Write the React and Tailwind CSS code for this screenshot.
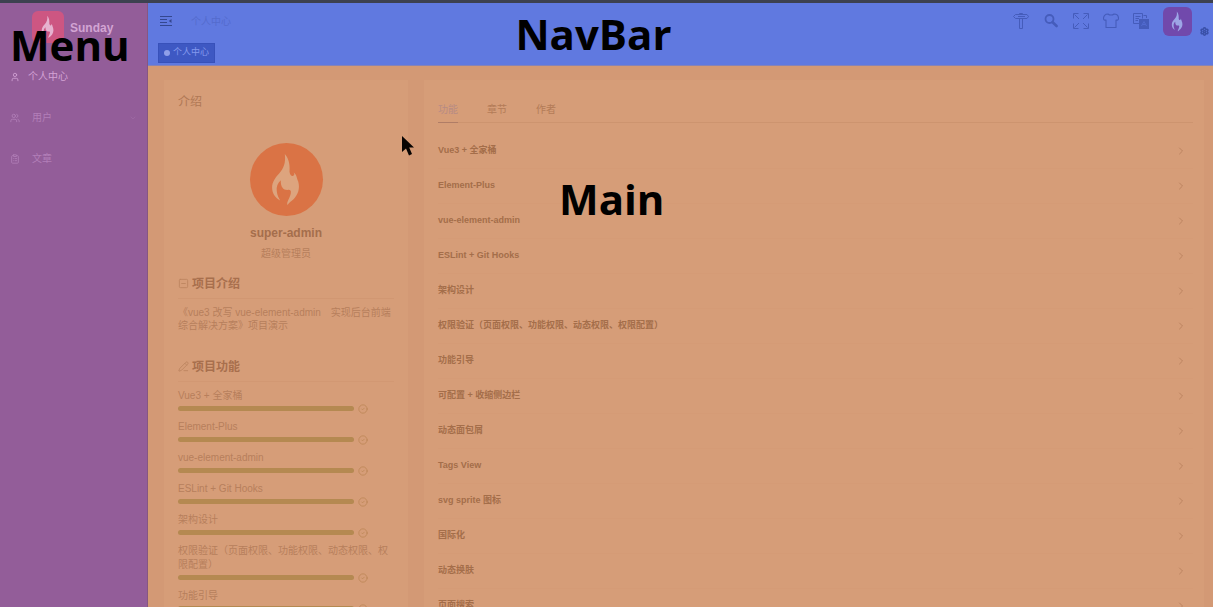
import React from "react";
import { User, Users, ClipboardList, ChevronDown, ChevronRight, Settings, CircleCheck, SquareMinus, PencilLine } from "lucide-react";

const features = [
  "Vue3 + 全家桶",
  "Element-Plus",
  "vue-element-admin",
  "ESLint + Git Hooks",
  "架构设计",
  "权限验证（页面权限、功能权限、动态权限、权限配置）",
  "功能引导",
  "可配置 + 收缩侧边栏",
  "动态面包屑",
  "Tags View",
  "svg sprite 图标",
  "国际化",
  "动态换肤",
  "页面搜索",
];

function Flame({ className }) {
  return (
    <svg viewBox="0 0 218 218" className={className} fill="currentColor" aria-hidden="true">
      <path d="M104 33C119 51 119 71 118 86C119 97 127 101 130 97C134 94 132 90 130 87C140 94 139 104 144 115C150 137 143 154 130 168C123 175 116 178 112 185C108 176 120 164 122 149C123 140 119 139 112 140C99 140 91 131 92 111C83 119 78 130 80 144C81 156 86 164 90 172C74 163 66 149 66 133C66 116 76 103 87 91C101 75 107 60 104 33Z" />
    </svg>
  );
}

function FoldIcon() {
  return (
    <svg viewBox="0 0 12 12" className="size-3" fill="none" stroke="currentColor" aria-hidden="true">
      <path d="M0 1.5H12M0 4.5H7M0 7.5H7M0 10.5H12" />
      <path d="M11.5 4V8L8.8 6Z" fill="currentColor" stroke="none" />
    </svg>
  );
}

function SignpostIcon() {
  return (
    <svg viewBox="0 0 16 16" className="size-4" fill="none" stroke="currentColor" aria-hidden="true">
      <path d="M2.5 1.5H14L15.5 3.5L14 5.5H2.5L.5 3.5ZM6.5 5.5V15.5H9.5V5.5M6.5 1.5V.5H9.5V1.5M5 3.5H12" />
    </svg>
  );
}

function SearchIcon() {
  return (
    <svg viewBox="0 0 16 16" className="size-4" fill="none" stroke="currentColor" aria-hidden="true">
      <circle cx="6.5" cy="6" r="4" strokeWidth="1.8" />
      <path d="M9.6 9.2L13.6 13" strokeWidth="2.6" strokeLinecap="round" />
    </svg>
  );
}

function FullscreenIcon() {
  return (
    <svg viewBox="0 0 16 16" className="size-4" fill="none" stroke="currentColor" aria-hidden="true">
      <path d="M5.5.5H.5V5.5M1.5 1.5L6 6M10.5.5H15.5V5.5M14.5 1.5L10 6M.5 10.5V15.5H5.5M1.5 14.5L6 10M15.5 10.5V15.5H10.5M14.5 14.5L10 10" />
    </svg>
  );
}

function ShirtIcon() {
  return (
    <svg viewBox="0 0 16 16" className="size-4" fill="none" stroke="currentColor" strokeWidth="1.1" strokeLinejoin="round" aria-hidden="true">
      <path d="M5 1C6.5 2.4 9.5 2.4 11 1C14 1 15.5 3 15.5 5.5C15.5 7 14.5 7.3 13 7V14.5H3V7C1.5 7.3.5 7 .5 5.5C.5 3 2 1 5 1Z" />
    </svg>
  );
}

function LanguageIcon() {
  return (
    <svg viewBox="0 0 16 16" className="size-4" fill="none" stroke="currentColor" aria-hidden="true">
      <path d="M6 10.5H.5V.5H9.5V5.5M2.5 3.5H7.5M2.5 5.5H6M2.5 7.5H5M10.5 2.5H13.5V5" />
      <rect x="6" y="6" width="10" height="10" fill="currentColor" stroke="none" />
      <path d="M8.5 13L11 8.5L13.5 13M9.5 11.5H12.5" className="stroke-[#526bd0]" />
    </svg>
  );
}

function RegionLabel({ className, children }) {
  return (
    <strong className={"pointer-events-none absolute font-['Open_Sans','Noto_Sans',sans-serif] text-[42px] leading-12 font-bold text-black " + className}>
      {children}
    </strong>
  );
}

function Sidebar() {
  return (
    <aside className="relative w-37 shrink-0 border-r border-[#865781] bg-[#935d99]">
      <div className="flex h-[53px] items-start gap-[6px] pt-2 pl-8">
        <div className="size-8 rounded-md bg-[#cd5682]">
          <Flame className="size-8 text-[#e6b2cf]" />
        </div>
        <h1 className="pt-[9px] text-[12px] leading-4 font-bold text-[#d2a4d3]">Sunday</h1>
      </div>
      <nav className="text-[10px]">
        <a href="#profile" className="flex h-[41px] items-center gap-2 px-[10px] text-[#d3a2d5]">
          <User className="size-[10px]" />个人中心
        </a>
        <a href="#users" className="flex h-[41px] items-center gap-3 px-[10px] text-[#b27fb8]">
          <Users className="size-[10px]" />用户
          <ChevronDown className="ml-auto size-2 text-[#a26ca8]" />
        </a>
        <a href="#articles" className="flex h-[41px] items-center gap-3 px-[10px] text-[#b27fb8]">
          <ClipboardList className="size-[10px]" />文章
        </a>
      </nav>
      <RegionLabel className="top-[18px] left-[10px]">Menu</RegionLabel>
    </aside>
  );
}

function NavBar() {
  return (
    <header className="relative h-[63px] shrink-0 border-b border-[#8783b5] bg-[#6079e0]">
      <div className="flex h-9 items-center pr-1 pl-3">
        <button type="button" aria-label="折叠菜单" className="text-[#34478f]"><FoldIcon /></button>
        <span className="ml-[19px] text-[10px] text-[#546bcd]">个人中心</span>
        <div className="ml-auto flex items-center gap-[14px] text-[#455cbb]">
          <button type="button" aria-label="引导"><SignpostIcon /></button>
          <button type="button" aria-label="搜索"><SearchIcon /></button>
          <button type="button" aria-label="全屏"><FullscreenIcon /></button>
          <button type="button" aria-label="换肤"><ShirtIcon /></button>
          <button type="button" aria-label="语言"><LanguageIcon /></button>
          <button type="button" aria-label="用户" className="size-[29px] rounded-md bg-[#7149ac]">
            <Flame className="size-[29px] text-[#9da5e6]" />
          </button>
        </div>
        <button type="button" aria-label="设置" className="ml-2 self-end pb-[3px] text-[#3a50a8]">
          <Settings className="size-[9px]" strokeWidth={4} />
        </button>
      </div>
      <div className="flex px-[10px] pt-1">
        <a href="#profile" className="flex h-5 items-center gap-[3px] border border-[#3851ba] bg-[#3e58c3] px-[5px] text-[9px] text-[#8499ee]">
          <span className="size-[6px] rounded-full bg-[#8f9fe9]" />个人中心
        </a>
      </div>
      <RegionLabel className="top-[7px] left-[34.5%]">NavBar</RegionLabel>
    </header>
  );
}

function ProjectCard() {
  return (
    <section className="w-[246px] shrink-0 border border-[#d39975] bg-[#d69d78] px-[14px] text-[10px] text-[#b77f5c]">
      <h2 className="pt-3 text-[12px] leading-5 text-[#b07855]">介绍</h2>
      <div className="mt-[31px] flex flex-col items-center">
        <div className="size-[73px] rounded-full bg-[#da7345]">
          <Flame className="size-[73px] text-[#dda47e]" />
        </div>
        <p className="mt-[9px] text-[12px] leading-4 font-bold text-[#a56e4c]">super-admin</p>
        <p className="mt-[6px] leading-[14px]">超级管理员</p>
      </div>
      <h3 className="mt-3 flex h-[26px] items-center gap-[3px] border-b border-[#d19772] pb-1 text-[12px] font-bold text-[#a86f4d]">
        <SquareMinus className="size-[11px] text-[#bd8560]" strokeWidth={2} />项目介绍
      </h3>
      <p className="mt-[7px] leading-[13px]">《vue3 改写 vue-element-admin　实现后台前端综合解决方案》项目演示</p>
      <h3 className="mt-6 flex h-[26px] items-center gap-[3px] border-b border-[#d29873] pb-1 text-[12px] font-bold text-[#a86f4d]">
        <PencilLine className="size-[11px] text-[#bd8560]" strokeWidth={2} />项目功能
      </h3>
      <ul className="mt-[7px]">
        {features.map((name) => (
          <li key={name} className="pb-[6px]">
            <p className="leading-[14px]">{name}</p>
            <div className="flex h-[11px] items-center gap-1">
              <div className="h-[5px] w-44 rounded-full bg-[#b58951]" />
              <CircleCheck className="size-[10px] text-[#bd8757]" strokeWidth={2} />
            </div>
          </li>
        ))}
      </ul>
    </section>
  );
}

function FeatureCard() {
  return (
    <section className="min-w-0 flex-1 border border-[#d39975] bg-[#d69d78] pt-4 pr-[11px] pl-[14px]">
      <div role="tablist" className="flex h-[27px] gap-[29px] border-b border-[#cd946f] text-[10px] text-[#b37b57]">
        <button role="tab" aria-selected="true" className="-mb-px border-b border-[#b07d66] text-[#b78b84]">功能</button>
        <button role="tab" aria-selected="false">章节</button>
        <button role="tab" aria-selected="false">作者</button>
      </div>
      <div className="pt-[11px]">
        {features.map((name) => (
          <button key={name} type="button" className="flex h-[35px] w-full items-center justify-between border-b border-[#d59b76] pr-[6px] text-left text-[9px] font-bold text-[#a46e4a]">
            {name}
            <ChevronRight className="size-3 text-[#bd8460]" />
          </button>
        ))}
      </div>
    </section>
  );
}

export default function App() {
  return (
    <div className="flex h-screen flex-col overflow-hidden bg-[#d39975] font-['Liberation_Sans','Noto_Sans_CJK_SC',sans-serif]">
      <div className="h-[3px] shrink-0 bg-[#3d4150]" />
      <div className="flex min-h-0 flex-1">
        <Sidebar />
        <div className="flex min-w-0 flex-1 flex-col">
          <NavBar />
          <main className="relative flex min-h-0 flex-1 items-start gap-[14px] overflow-hidden pt-[13px] pr-2 pl-[15px]">
            <ProjectCard />
            <FeatureCard />
            <RegionLabel className="top-[109px] left-[38.6%]">Main</RegionLabel>
            <svg viewBox="0 0 12 20" className="absolute top-[70px] left-[254px] h-5 w-3" aria-hidden="true">
              <path d="M0 0V16L4 12.5L7 19.5L10 18L7.2 11.5H12Z" fill="#080402" />
            </svg>
          </main>
        </div>
      </div>
    </div>
  );
}
